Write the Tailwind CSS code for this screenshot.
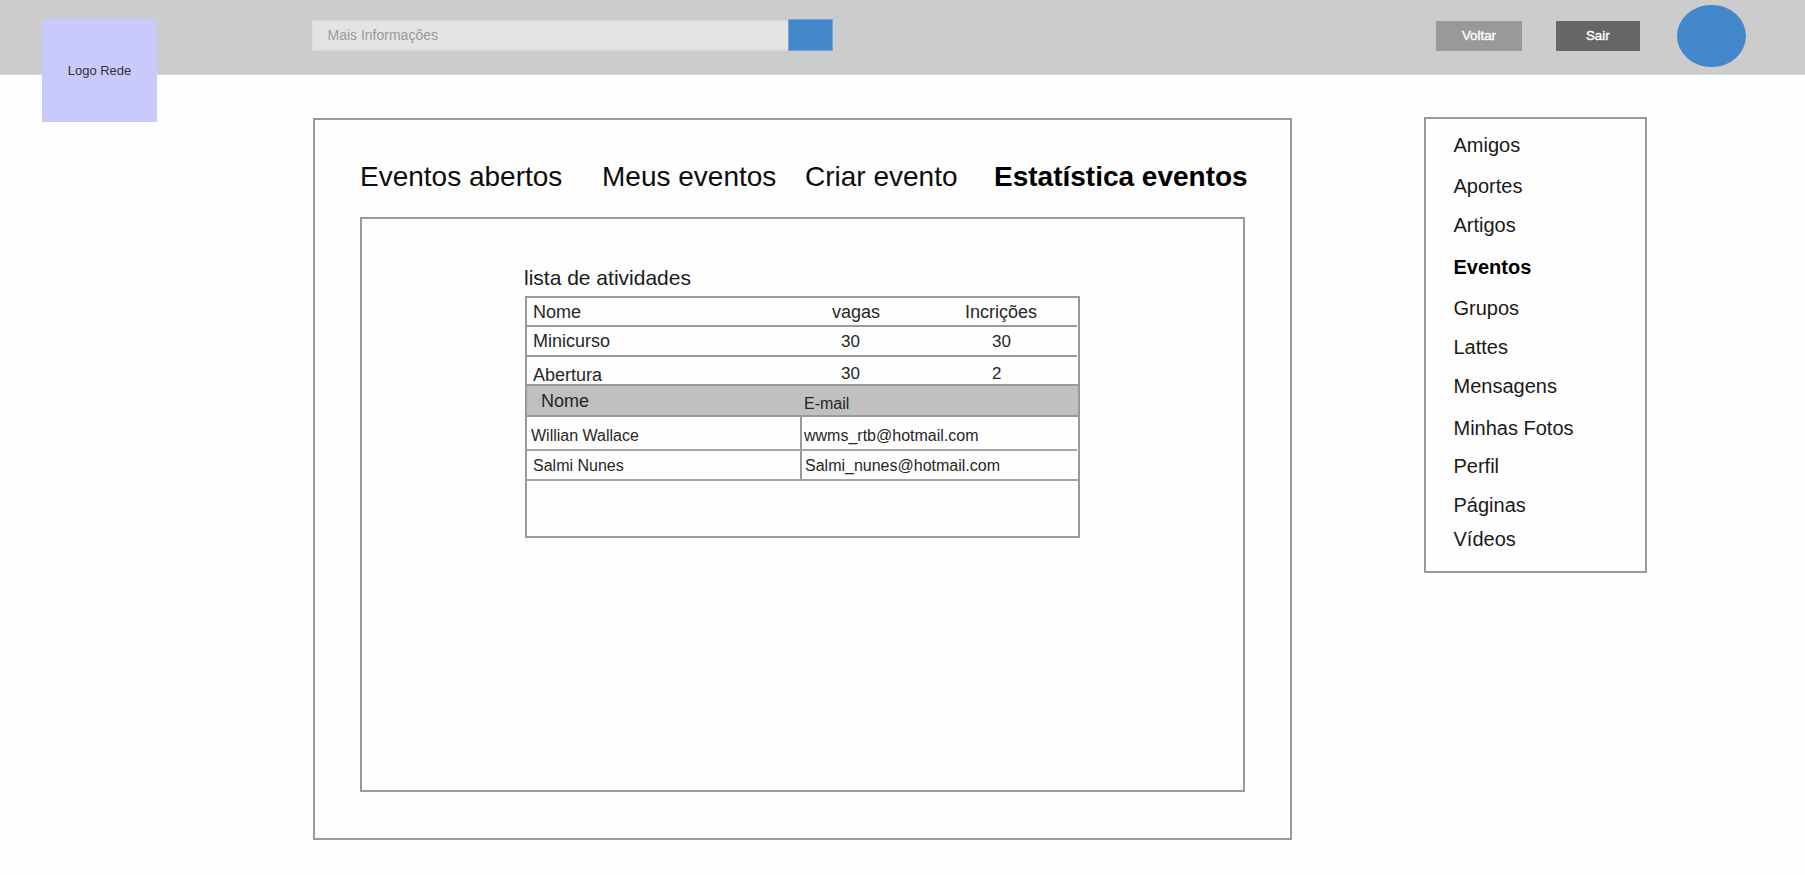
<!DOCTYPE html>
<html lang="pt-BR">
<head>
<meta charset="utf-8">
<title>Estatística eventos</title>
<script src="https://cdn.jsdelivr.net/npm/@tailwindcss/browser@4"></script>
</head>
<body class="h-[875px] w-[1805px] overflow-hidden bg-[#fefefe] font-['Liberation_Sans',Arial,sans-serif] text-[#1a1a1a]">
<header class="flex h-[75px] items-start border-b border-[#d8d8d8] bg-[#ccc]">
  <div class="relative z-10 mt-[19px] ml-[42px] h-[103px] w-[115px] shrink-0 bg-[#c9c9fc] pt-11 text-center text-[13px] leading-[15px] text-[#333]">Logo Rede</div>
  <form class="mt-[19px] ml-[155px] flex h-8 w-[521px]">
    <div class="mt-px h-[31px] w-[476px] border-y-2 border-l-2 border-[#ddd] bg-[#e4e4e4] pt-[5px] pl-[13.5px] text-sm leading-4 text-[#999]">Mais Informações</div>
    <div class="w-[45px] border border-[#78a5d0] bg-[#48c]"></div>
  </form>
  <div class="mt-[21px] ml-[603px] h-[30px] w-[86px] bg-[#999] pt-[7px] text-center text-[13.3px] leading-4 text-white [-webkit-text-stroke:0.4px_white]">Voltar</div>
  <div class="mt-[21px] ml-[33.5px] h-[30px] w-[84.5px] bg-[#666] pt-[7px] text-center text-[13.3px] leading-4 text-white [-webkit-text-stroke:0.4px_white]">Sair</div>
  <div class="mt-[4.5px] ml-[37px] h-[62.5px] w-[69px] rounded-[50%] bg-[#48c]"></div>
</header>
<div class="flex items-start">
  <main class="mt-[43px] ml-[313px] h-[722px] w-[979px] border-2 border-[#999] pl-[45px]">
    <nav class="flex h-[97px] pt-[41px] text-[28px] leading-[31px] whitespace-nowrap text-[#0d0d0d]">
      <a class="w-[242px]">Eventos abertos</a>
      <a class="w-[203px]">Meus eventos</a>
      <a class="w-[189px]">Criar evento</a>
      <a class="font-bold text-black">Estatística eventos</a>
    </nav>
    <section class="h-[575px] w-[885px] border-2 border-[#999] pt-[47px] pl-[163px]">
      <h2 class="-ml-px h-[30px] text-[21px] leading-[23px]">lista de atividades</h2>
      <div class="h-[242px] w-[555px] border-2 border-[#999] text-lg leading-5 text-[#262626]">
        <div class="flex h-[29px] w-[550px] border-b-2 border-[#999] pt-1 pl-[6px]">
          <div class="w-[299px]">Nome</div><div class="w-[133px]">vagas</div><div>Incrições</div>
        </div>
        <div class="flex h-[30px] w-[550px] border-b-2 border-[#999] pt-1 pl-[6px]">
          <div class="w-[308px]">Minicurso</div><div class="w-[151px] pt-px text-[17px]">30</div><div class="pt-px text-[17px]">30</div>
        </div>
        <div class="flex h-[29px] border-b-2 border-[#999] pl-[6px]">
          <div class="w-[308px] pt-2">Abertura</div><div class="w-[151px] pt-[7px] text-[17px]">30</div><div class="pt-[7px] text-[17px]">2</div>
        </div>
        <div class="flex h-[31px] border-b-2 border-[#999] bg-[#c0c0c0] pl-[14px]">
          <div class="w-[263px] pt-[5px]">Nome</div><div class="pt-[9px] text-base leading-[18px]">E-mail</div>
        </div>
        <div class="flex h-[34px] w-[550px] border-b-2 border-[#a3a3a3] text-base leading-[18px]">
          <div class="w-[275px] border-r-2 border-[#999] pt-[10px] pl-1">Willian Wallace</div><div class="pt-[10px] pl-[2px]">wwms_rtb@hotmail.com</div>
        </div>
        <div class="flex h-[30px] border-b-2 border-[#a3a3a3] text-base leading-[18px]">
          <div class="w-[275px] border-r-2 border-[#999] pt-[6px] pl-[6px]">Salmi Nunes</div><div class="pt-[6px] pl-[3px]">Salmi_nunes@hotmail.com</div>
        </div>
      </div>
    </section>
  </main>
  <aside class="mt-[42px] ml-[132px] h-[456px] w-[223px] border-2 border-[#999] pt-[15px] pl-[27.5px] text-xl leading-[22px]">
    <ul>
      <li class="h-[41px]">Amigos</li>
      <li class="h-[39px]">Aportes</li>
      <li class="h-[42px]">Artigos</li>
      <li class="h-[41px] font-bold text-black">Eventos</li>
      <li class="h-[39px]">Grupos</li>
      <li class="h-[39px]">Lattes</li>
      <li class="h-[42px]">Mensagens</li>
      <li class="h-[38px]">Minhas Fotos</li>
      <li class="h-[39px]">Perfil</li>
      <li class="h-[34px]">Páginas</li>
      <li>Vídeos</li>
    </ul>
  </aside>
</div>
</body>
</html>
